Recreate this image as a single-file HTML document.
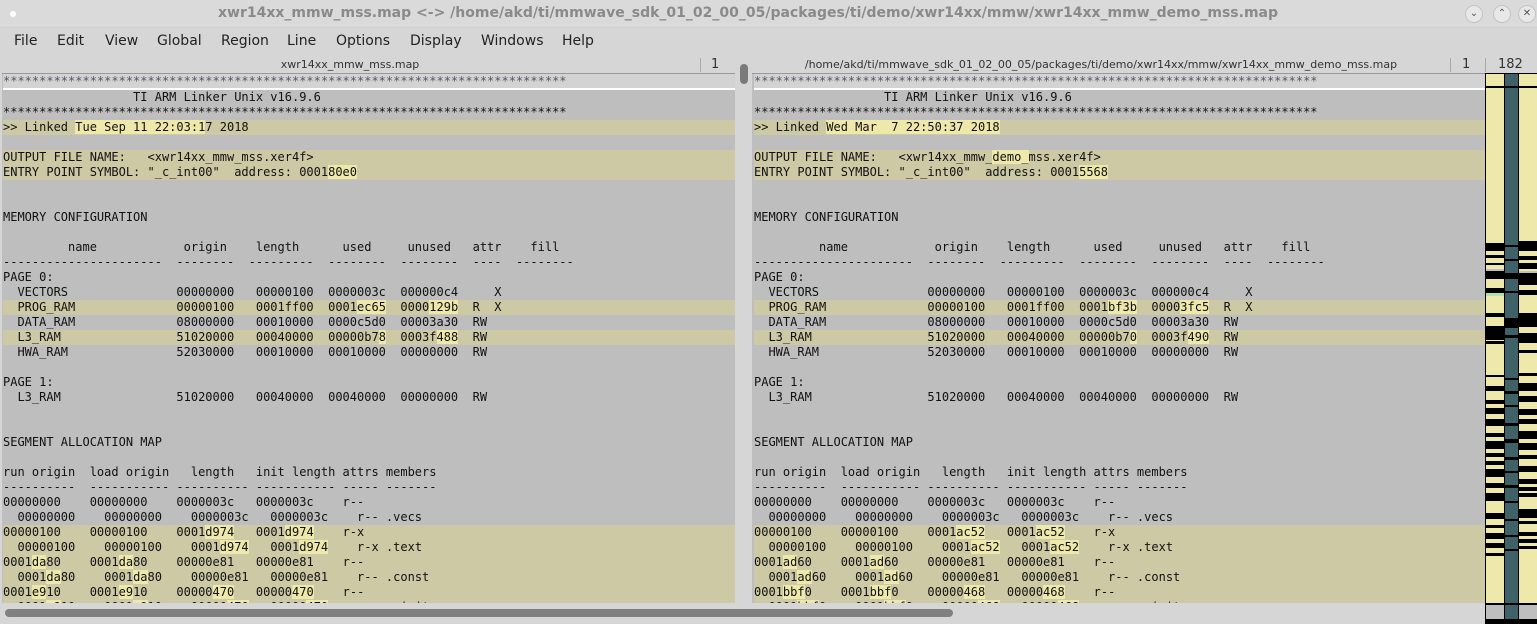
<!DOCTYPE html>
<html><head><style>
*{margin:0;padding:0;box-sizing:border-box}
body{width:1537px;height:624px;overflow:hidden;background:#d6d6d6;font-family:"DejaVu Sans","Liberation Sans",sans-serif;position:relative}
.title{position:absolute;left:0;top:0;width:1537px;height:28px;background:#dadada;border-bottom:1px solid #cfcfcf}
.title .t{position:absolute;left:0;width:1496px;top:5px;text-align:center;font-weight:bold;font-size:14px;color:#8a8a8a}
.btn{position:absolute;top:5px;width:18px;height:18px;border-radius:9px;background:#e8e8e8;border:1px solid #c4c4c4;color:#555;font-size:10px;text-align:center;line-height:16px}
.menu{position:absolute;top:28px;left:0;width:1537px;height:28px;background:#d6d6d6}
.menu span{position:absolute;top:5px;font-size:14px;color:#222}
.hdr{position:absolute;top:56px;height:17px;font-size:11px;color:#333;background:#d6d6d6}
.pane{position:absolute;top:73px;height:530px;background:#bebebe;overflow:hidden;border-top:1px solid #999}
pre{font-family:"DejaVu Sans Mono","Liberation Mono",monospace;font-size:12px;line-height:15px;color:#111;padding-left:1px;letter-spacing:0px}
.r{display:block;height:15px}
.a{background:#d3d3d3;border-bottom:2px solid #fff;height:16px;color:#556}
.y{background:#cdc9a5}
.h{background:#eee8aa}
.sep{position:absolute;top:58px;width:1px;height:14px;background:#aaa}
</style></head><body>
<div class="title"><div style="position:absolute;left:10px;top:11px;width:6px;height:6px;border-radius:3px;background:#fff"></div>
<div class="t">xwr14xx_mmw_mss.map &lt;-&gt; /home/akd/ti/mmwave_sdk_01_02_00_05/packages/ti/demo/xwr14xx/mmw/xwr14xx_mmw_demo_mss.map</div>
<div class="btn" style="left:1465px">&#8964;</div><div class="btn" style="left:1493px">&#8963;</div><div class="btn" style="left:1518px">&#10005;</div></div>
<div class="menu"><span style="left:14px">File</span><span style="left:57px">Edit</span><span style="left:105px">View</span><span style="left:157px">Global</span><span style="left:221px">Region</span><span style="left:287px">Line</span><span style="left:336px">Options</span><span style="left:410px">Display</span><span style="left:481px">Windows</span><span style="left:562px">Help</span></div>
<div class="hdr" style="left:0;width:735px"><span style="position:absolute;left:0;width:700px;text-align:center;top:2px">xwr14xx_mmw_mss.map</span><span style="position:absolute;left:711px;top:1px;font-size:13px">1</span></div>
<div class="sep" style="left:700px"></div>
<div class="hdr" style="left:752px;width:733px"><span style="position:absolute;left:0;width:698px;text-align:center;top:2px">/home/akd/ti/mmwave_sdk_01_02_00_05/packages/ti/demo/xwr14xx/mmw/xwr14xx_mmw_demo_mss.map</span><span style="position:absolute;left:710px;top:1px;font-size:13px">1</span></div>
<div class="sep" style="left:1450px"></div><div class="sep" style="left:1485px"></div>
<div style="position:absolute;left:1498px;top:57px;font-size:13px;color:#333">182</div>
<div style="position:absolute;left:740px;top:64px;width:8px;height:20px;border-radius:4px;background:#7a7a7a"></div>

<div class="pane" style="left:2px;width:733px"><pre><span class="r a">******************************************************************************</span><span class="r">                  TI ARM Linker Unix v16.9.6</span><span class="r">******************************************************************************</span><span class="r y">&gt;&gt; Linked <span class="h">Tue Sep 11 22:03:1</span>7 2018</span><span class="r"> </span><span class="r y">OUTPUT FILE NAME:   &lt;xwr14xx_mmw_mss.xer4f&gt;</span><span class="r y">ENTRY POINT SYMBOL: "_c_int00"  address: 0001<span class="h">80e0</span></span><span class="r"> </span><span class="r"> </span><span class="r">MEMORY CONFIGURATION</span><span class="r"> </span><span class="r">         name            origin    length      used     unused   attr    fill</span><span class="r">----------------------  --------  ---------  --------  --------  ----  --------</span><span class="r">PAGE 0:</span><span class="r">  VECTORS               00000000   00000100  0000003c  000000c4     X</span><span class="r y">  PROG_RAM              00000100   0001ff00  0001<span class="h">ec65</span>  0000<span class="h">129b</span>  R  X</span><span class="r">  DATA_RAM              08000000   00010000  0000c5d0  00003a30  RW</span><span class="r y">  L3_RAM                51020000   00040000  00000b7<span class="h">8</span>  0003f<span class="h">488</span>  RW</span><span class="r">  HWA_RAM               52030000   00010000  00010000  00000000  RW</span><span class="r"> </span><span class="r">PAGE 1:</span><span class="r">  L3_RAM                51020000   00040000  00040000  00000000  RW</span><span class="r"> </span><span class="r"> </span><span class="r">SEGMENT ALLOCATION MAP</span><span class="r"> </span><span class="r">run origin  load origin   length   init length attrs members</span><span class="r">----------  ----------- ---------- ----------- ----- -------</span><span class="r">00000000    00000000    0000003c   0000003c    r--</span><span class="r">  00000000    00000000    0000003c   0000003c    r-- .vecs</span><span class="r y">00000100    00000100    0001<span class="h">d974</span>   0001<span class="h">d974</span>    r-x</span><span class="r y">  00000100    00000100    0001<span class="h">d974</span>   0001<span class="h">d974</span>    r-x .text</span><span class="r y">0001<span class="h">da</span>80    0001<span class="h">da</span>80    00000e81   00000e81    r--</span><span class="r y">  0001<span class="h">da</span>80    0001<span class="h">da</span>80    00000e81   00000e81    r-- .const</span><span class="r y">0001<span class="h">e9</span>10    0001<span class="h">e9</span>10    00000<span class="h">470</span>   00000<span class="h">470</span>    r--</span><span class="r y">  0001<span class="h">e9</span>10    0001<span class="h">e9</span>10    00000<span class="h">470</span>   00000<span class="h">470</span>    r-- .cinit</span></pre></div>

<div class="pane" style="left:752px;width:733px"><pre style="padding-left:2px"><span class="r a">******************************************************************************</span><span class="r">                  TI ARM Linker Unix v16.9.6</span><span class="r">******************************************************************************</span><span class="r y">&gt;&gt; Linked <span class="h">Wed Mar  7 22:50:37 2018</span></span><span class="r"> </span><span class="r y">OUTPUT FILE NAME:   &lt;xwr14xx_mmw_<span class="h">demo_</span>mss.xer4f&gt;</span><span class="r y">ENTRY POINT SYMBOL: "_c_int00"  address: 0001<span class="h">5568</span></span><span class="r"> </span><span class="r"> </span><span class="r">MEMORY CONFIGURATION</span><span class="r"> </span><span class="r">         name            origin    length      used     unused   attr    fill</span><span class="r">----------------------  --------  ---------  --------  --------  ----  --------</span><span class="r">PAGE 0:</span><span class="r">  VECTORS               00000000   00000100  0000003c  000000c4     X</span><span class="r y">  PROG_RAM              00000100   0001ff00  0001<span class="h">bf3b</span>  0000<span class="h">3fc5</span>  R  X</span><span class="r">  DATA_RAM              08000000   00010000  0000c5d0  00003a30  RW</span><span class="r y">  L3_RAM                51020000   00040000  00000b7<span class="h">0</span>  0003f<span class="h">490</span>  RW</span><span class="r">  HWA_RAM               52030000   00010000  00010000  00000000  RW</span><span class="r"> </span><span class="r">PAGE 1:</span><span class="r">  L3_RAM                51020000   00040000  00040000  00000000  RW</span><span class="r"> </span><span class="r"> </span><span class="r">SEGMENT ALLOCATION MAP</span><span class="r"> </span><span class="r">run origin  load origin   length   init length attrs members</span><span class="r">----------  ----------- ---------- ----------- ----- -------</span><span class="r">00000000    00000000    0000003c   0000003c    r--</span><span class="r">  00000000    00000000    0000003c   0000003c    r-- .vecs</span><span class="r y">00000100    00000100    0001<span class="h">ac52</span>   0001<span class="h">ac52</span>    r-x</span><span class="r y">  00000100    00000100    0001<span class="h">ac52</span>   0001<span class="h">ac52</span>    r-x .text</span><span class="r y">0001<span class="h">ad</span>60    0001<span class="h">ad</span>60    00000e81   00000e81    r--</span><span class="r y">  0001<span class="h">ad</span>60    0001<span class="h">ad</span>60    00000e81   00000e81    r-- .const</span><span class="r y">0001<span class="h">bbf</span>0    0001<span class="h">bbf</span>0    00000<span class="h">468</span>   00000<span class="h">468</span>    r--</span><span class="r y">  0001<span class="h">bbf</span>0    0001<span class="h">bbf</span>0    00000<span class="h">468</span>   00000<span class="h">468</span>    r-- .cinit</span></pre></div>

<svg style="position:absolute;left:1485px;top:73px" width="52" height="551" viewBox="0 0 52 551">
<rect x="0" y="0" width="52" height="551" fill="#000"/>
<rect x="1" y="1" width="18" height="548" fill="#eee8aa"/>
<rect x="20" y="1" width="13" height="548" fill="#3f6269"/>
<rect x="34" y="1" width="18" height="548" fill="#eee8aa"/>
<rect x="1" y="532" width="18" height="14" fill="#bebebe"/><rect x="34" y="532" width="18" height="14" fill="#bebebe"/>
<rect x="0" y="546" width="52" height="5" fill="#000"/>
<g fill="#000">
<rect x="1" y="13" width="51" height="2"/>
<rect x="1" y="170" width="18" height="8"/><rect x="34" y="168" width="18" height="10"/>
<rect x="1" y="182" width="18" height="3"/><rect x="34" y="183" width="18" height="4"/>
<rect x="1" y="190" width="18" height="2"/><rect x="34" y="190" width="18" height="6"/>
<rect x="1" y="196" width="18" height="10"/><rect x="34" y="200" width="18" height="12"/>
<rect x="1" y="215" width="18" height="6"/><rect x="34" y="217" width="18" height="5"/>
<rect x="1" y="240" width="18" height="4"/><rect x="34" y="240" width="18" height="14"/>
<rect x="1" y="253" width="18" height="14"/><rect x="34" y="260" width="18" height="10"/>
<rect x="1" y="268" width="18" height="3"/><rect x="34" y="277" width="18" height="3"/>
<rect x="1" y="302" width="18" height="2"/><rect x="34" y="300" width="18" height="3"/>
<rect x="1" y="313" width="18" height="5"/><rect x="34" y="310" width="18" height="8"/>
<rect x="1" y="327" width="18" height="4"/><rect x="34" y="323" width="18" height="6"/>
<rect x="1" y="335" width="18" height="6"/><rect x="34" y="336" width="18" height="6"/>
<rect x="1" y="346" width="18" height="7"/><rect x="34" y="346" width="18" height="5"/>
<rect x="1" y="360" width="18" height="4"/><rect x="34" y="358" width="18" height="8"/>
<rect x="1" y="368" width="18" height="8"/><rect x="34" y="370" width="18" height="7"/>
<rect x="1" y="380" width="18" height="4"/><rect x="34" y="382" width="18" height="4"/>
<rect x="1" y="388" width="18" height="4"/><rect x="34" y="393" width="18" height="6"/>
<rect x="1" y="396" width="18" height="8"/><rect x="34" y="406" width="18" height="5"/>
<rect x="1" y="410" width="18" height="5"/><rect x="34" y="414" width="18" height="4"/>
<rect x="1" y="420" width="18" height="8"/><rect x="34" y="420" width="18" height="4"/>
<rect x="1" y="440" width="18" height="6"/><rect x="34" y="436" width="18" height="9"/>
<rect x="1" y="452" width="18" height="3"/><rect x="34" y="448" width="18" height="3"/>
<rect x="1" y="460" width="18" height="6"/><rect x="34" y="459" width="18" height="4"/>
<rect x="1" y="470" width="18" height="5"/><rect x="34" y="466" width="18" height="4"/>
<rect x="1" y="480" width="18" height="3"/><rect x="34" y="473" width="18" height="3"/>
<rect x="20" y="172" width="13" height="2"/><rect x="20" y="186" width="13" height="2"/><rect x="20" y="200" width="13" height="6"/>
<rect x="20" y="218" width="13" height="2"/><rect x="20" y="245" width="13" height="10"/><rect x="20" y="262" width="13" height="3"/>
<rect x="20" y="305" width="13" height="2"/><rect x="20" y="318" width="13" height="3"/><rect x="20" y="332" width="13" height="2"/>
<rect x="20" y="350" width="13" height="3"/><rect x="20" y="366" width="13" height="4"/><rect x="20" y="384" width="13" height="3"/>
<rect x="20" y="398" width="13" height="2"/><rect x="20" y="412" width="13" height="3"/><rect x="20" y="428" width="13" height="2"/>
<rect x="20" y="446" width="13" height="2"/><rect x="20" y="462" width="13" height="2"/><rect x="20" y="476" width="13" height="2"/>
<rect x="1" y="530" width="51" height="2"/>
</g>
<rect x="1" y="220" width="18" height="3" fill="#b0e0b0"/>
<rect x="1" y="196" width="18" height="2" fill="#bebebe"/><rect x="34" y="198" width="18" height="2" fill="#bebebe"/>
</svg>
<div style="position:absolute;left:5px;top:609px;width:948px;height:8px;border-radius:4px;background:#808080"></div>
</body></html>
